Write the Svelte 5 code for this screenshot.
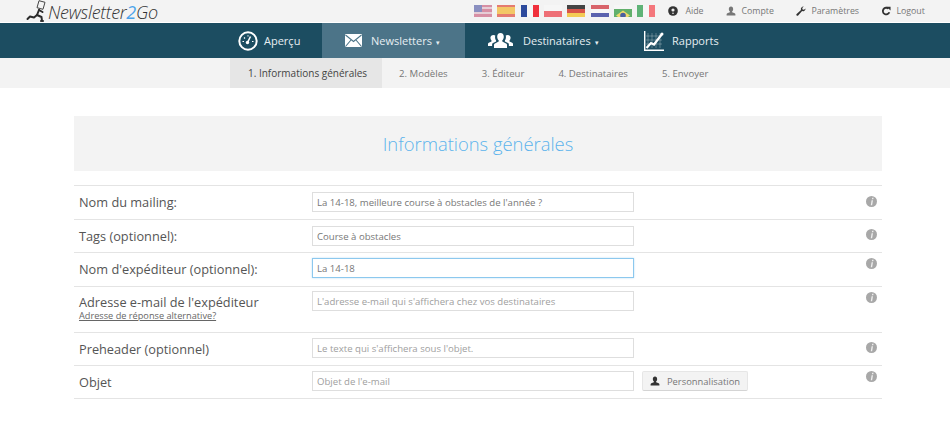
<script>
  const flags = [
    { name: 'us', stripes: ['#d78fa4', '#e6cdd6', '#d78fa4', '#e6cdd6', '#d78fa4'], canton: '#8a8fc0' },
    { name: 'es', stripes: ['#e57b70', '#f3c766', '#f3c766', '#f3c766', '#e57b70'], canton: null },
    { name: 'fr', cols: ['#2d4a9c', '#f6f6f6', '#f0303c'] },
    { name: 'pl', stripes: ['#f6f6f6', '#f6f6f6', '#ee6f76', '#ee6f76'], canton: null },
    { name: 'de', stripes: ['#444', '#d9554a', '#f3cb55'], canton: null },
    { name: 'nl', stripes: ['#d8636a', '#f6f6f6', '#5a62ae'], canton: null },
    { name: 'br', brazil: true },
    { name: 'it', cols: ['#5fb377', '#f6f6f6', '#f4777c'] }
  ];

  const steps = ['1. Informations générales', '2. Modèles', '3. Éditeur', '4. Destinataires', '5. Envoyer'];

  const rows = [
    { label: 'Nom du mailing:', value: 'La 14-18, meilleure course à obstacles de l\'année ?' },
    { label: 'Tags (optionnel):', value: 'Course à obstacles' },
    { label: 'Nom d\'expéditeur (optionnel):', value: 'La 14-18', focus: true },
    { label: 'Adresse e-mail de l\'expéditeur', placeholder: 'L\'adresse e-mail qui s\'affichera chez vos destinataires', link: 'Adresse de réponse alternative?' },
    { label: 'Preheader (optionnel)', placeholder: 'Le texte qui s\'affichera sous l\'objet.' },
    { label: 'Objet', placeholder: 'Objet de l\'e-mail', button: true }
  ];
</script>

{#snippet person(size)}
  <svg class="ico" width={size} height={size} viewBox="0 0 12 12">
    <path fill="currentColor" d="M6 .5c1.700 0 2.600 1.300 2.600 3 0 1.200-.5 2.300-1.200 2.900v1.100l3 1.300c.6.300.9.700.9 1.300v1.400H.7v-1.400c0-.6.300-1 .9-1.300l3-1.300V6.400C3.900 5.800 3.400 4.700 3.400 3.500c0-1.700.9-3 2.600-3z" />
  </svg>
{/snippet}

<header class="top">
  <div class="logo">
    <svg width="22" height="22" viewBox="0 0 22 22">
      <path fill="#f3f3f3" stroke="#444" stroke-width="1" d="M13 .7l6 1.600-2 7-6-1.600z" />
      <g fill="none" stroke="#2b2b2b" stroke-width="2" stroke-linecap="round" stroke-linejoin="round">
        <path d="M13 10l-2 5 4.500 2 .5 4" />
        <path d="M11 15l-3 2.500-4-1-2.500 2.500" />
        <path d="M13 10l3.500 2" />
      </g>
      <path d="M14 21h4" stroke="#2b2b2b" stroke-width="1.500" />
    </svg>
    <span class="logo-text">Newsletter<b>2</b>Go</span>
  </div>
  <div class="flags">
    {#each flags as f}
      <span class="flag">
        {#if f.cols}
          <span class="cols">
            {#each f.cols as c}<i style="background:{c}"></i>{/each}
          </span>
        {:else if f.brazil}
          <svg width="18" height="13" viewBox="0 0 18 13">
            <rect width="18" height="13" fill="#62b06c" />
            <path d="M9 1.500l7 5-7 5-7-5z" fill="#efd96a" />
            <circle cx="9" cy="6.500" r="2.800" fill="#4a5fa0" />
          </svg>
        {:else}
          <span class="stripes">
            {#each f.stripes as c}<i style="background:{c}"></i>{/each}
          </span>
          {#if f.canton}<span class="canton" style="background:{f.canton}"></span>{/if}
        {/if}
      </span>
    {/each}
  </div>
  <nav class="tools">
    <span class="tool aide">
      <svg class="ico" width="10" height="10" viewBox="0 0 12 12">
        <circle cx="6" cy="6" r="5.800" fill="#333" />
        <circle cx="6" cy="4.800" r="1.900" fill="#eee" />
        <rect x="5.200" y="8" width="1.600" height="1.600" fill="#eee" />
      </svg>
      Aide
    </span>
    <span class="tool compte">{@render person(10)} Compte</span>
    <span class="tool params">
      <svg class="ico" width="10" height="10" viewBox="0 0 12 12">
        <path fill="#333" d="M11.500 3a3.200 3.200 0 0 1-4.200 3L2.600 11.300a1.200 1.200 0 0 1-1.800-1.700L6 4.700A3.200 3.200 0 0 1 9.300.5L7.500 2.400l.4 1.700 1.700.4z" />
      </svg>
      Paramètres
    </span>
    <span class="tool logout">
      <svg class="ico" width="10" height="10" viewBox="0 0 12 12">
        <path fill="none" stroke="#333" stroke-width="2.200" d="M9 3.200A4 4 0 1 0 10 7.500" />
        <path fill="#333" d="M6.500 1h5v4.500z" />
      </svg>
      Logout
    </span>
  </nav>
</header>

<nav class="main">
  <a class="item apercu">
    <svg width="20" height="20" viewBox="0 0 20 20">
      <circle cx="10" cy="10" r="8.700" fill="none" stroke="#fff" stroke-width="2" />
      <path d="M9.500 11.500L12.500 5.500" stroke="#fff" stroke-width="1.500" />
      <circle cx="9.500" cy="11.500" r="1.700" fill="#fff" />
      <path d="M4.500 10.500h1.500M14 10.500h1.500M6 6.500l1 1M10 4.200v1.300" stroke="#fff" stroke-width="1.100" />
    </svg>
    <span>Aperçu</span>
  </a>
  <a class="item active">
    <svg width="17" height="13" viewBox="0 0 17 13">
      <rect width="17" height="13" rx="1" fill="#fff" />
      <path d="M.5 1l8 6.500 8-6.500M.5 12.500l5.500-6.500M16.500 12.500L11 6" fill="none" stroke="#4c7488" stroke-width="1.100" />
    </svg>
    <span>Newsletters<small>▾</small></span>
  </a>
  <a class="item dest">
    <svg width="25" height="17" viewBox="0 0 25 17">
      <g fill="#fff">
        <path d="M12.500 1c2.200 0 3.300 1.600 3.300 3.700 0 1.500-.6 2.800-1.500 3.600v1.300l3.700 1.800c.7.300 1 .8 1 1.500V16H6v-3.100c0-.7.300-1.200 1-1.500l3.700-1.800V8.300c-.9-.8-1.500-2.100-1.500-3.600C9.200 2.600 10.300 1 12.500 1z" />
        <path d="M5.500 3c.7 0 1.300.2 1.800.6-.5 1.800-.2 3.600.8 5v.9L5 11c-.6.300-.9.800-.9 1.500V14H0v-2c0-.6.200-.9.800-1.200L3.500 9.500v-1C2.800 7.800 2.400 6.800 2.400 5.800 2.400 4.200 3.700 3 5.500 3z" />
        <path d="M19.500 3c-.7 0-1.300.2-1.800.6.500 1.800.2 3.600-.8 5v.9l3.100 1.500c.6.300.9.800.9 1.500V14H25v-2c0-.6-.2-.9-.8-1.200l-2.700-1.300v-1c.7-.7 1.100-1.700 1.100-2.700C22.600 4.200 21.300 3 19.500 3z" />
      </g>
    </svg>
    <span>Destinataires<small>▾</small></span>
  </a>
  <a class="item rapports">
    <svg width="20" height="20" viewBox="0 0 20 20">
      <path d="M.7 0v19.300H20" fill="none" stroke="#fff" stroke-width="1.400" />
      <path d="M4 2v15M8 2v15M12 2v15M16 2v15M2 5h16M2 9h16M2 13h16" stroke="#fff" stroke-opacity=".4" stroke-width=".7" />
      <path d="M2.500 17l4.500-5 3 1.500L18 3" fill="none" stroke="#fff" stroke-width="2.200" />
      <circle cx="18" cy="3" r="1.500" fill="#fff" />
    </svg>
    <span>Rapports</span>
  </a>
</nav>

<nav class="steps">
  {#each steps as s, i}
    <a class="step" class:on={i === 0}>{s}</a>
  {/each}
</nav>

<main class="content">
  <h1>Informations générales</h1>
  <div class="form">
    {#each rows as r}
      <div class="row" class:tall={r.link}>
        <div class="label">
          {r.label}
          {#if r.link}<a class="alt">{r.link}</a>{/if}
        </div>
        <div class="field">
          <input
            type="text"
            class:focus={r.focus}
            value={r.value ?? ''}
            placeholder={r.placeholder ?? ''}
          />
          {#if r.button}
            <button type="button">{@render person(10)} Personnalisation</button>
          {/if}
        </div>
        <svg class="info" width="11" height="11" viewBox="0 0 12 12">
          <circle cx="6" cy="6" r="6" fill="#a8a8a8" />
          <path d="M6.800 2h1.500l-.4 1.500H6.400zM6.100 4.600h1.500L6.700 10H5.200z" fill="#f0f0f0" />
        </svg>
      </div>
    {/each}
  </div>
</main>

<style>
  :global(body) {
    margin: 0;
    background: #fff;
    font-family: "Open Sans", sans-serif;
    color: #444;
    overflow: hidden;
  }
  a { text-decoration: none; }
  .ico { flex: none; }

  .top {
    height: 22px;
    background: #f3f3f3;
    border-bottom: 1px solid #fff;
    display: flex;
    align-items: center;
    padding-left: 26px;
  }
  .logo {
    display: flex;
    align-items: center;
    width: 448px;
    height: 22px;
  }
  .logo svg { flex: none; }
  .logo-text {
    font-style: italic;
    font-weight: 300;
    font-size: 18px;
    letter-spacing: -.3px;
    color: #333;
    margin-top: 1px;
  }
  .logo-text b { color: #4aa3ea; font-weight: 400; }
  .flags { display: flex; gap: 5.350px; }
  .flag {
    display: block;
    width: 18px;
    height: 12px;
    position: relative;
    overflow: hidden;
    background: #f6f6f6;
    margin-top: -1px;
  }
  .stripes, .cols { display: flex; width: 100%; height: 100%; }
  .stripes { flex-direction: column; }
  .stripes i, .cols i { flex: 1; display: block; }
  .canton { position: absolute; left: 0; top: 0; width: 8px; height: 7px; }
  .tools { display: flex; align-items: center; font-size: 8.800px; color: #777; margin-left: 13px; }
  .tool { display: flex; align-items: center; gap: 6px; }
  .aide { width: 58px; gap: 7px; }
  .compte { width: 70px; gap: 5px; }
  .params { width: 85px; gap: 5px; }
  .logout { gap: 5px; }

  .main {
    height: 35px;
    background: #1c4d61;
    display: flex;
    padding-left: 222px;
    color: #fff;
  }
  .item {
    display: flex;
    align-items: center;
    font-size: 11px;
    color: #e6eef2;
    box-sizing: border-box;
  }
  .apercu { width: 100px; padding-left: 16px; gap: 6px; }
  .active { width: 143px; padding-left: 23px; background: #4c7488; gap: 9px; }
  .dest { width: 179px; padding-left: 23px; gap: 10px; }
  .rapports { gap: 8px; }
  .item small { font-size: 7px; margin-left: 4px; }

  .steps {
    height: 30px;
    background: #f3f3f3;
    display: flex;
    padding-left: 230px;
    font-size: 9.600px;
    color: #777;
  }
  .step { display: flex; align-items: center; padding: 0 17px; color: #777; }
  .step.on { background: #e6e6e6; color: #444; font-size: 10px; padding: 0 15px 0 18px; }

  .content { padding: 28px 68px 0 74px; }
  h1 {
    margin: 0 0 14px;
    height: 55px;
    background: #f3f3f3;
    font-size: 18.400px;
    font-weight: 300;
    line-height: 55px;
    text-align: center;
    color: #5cb3ec;
  }
  .form { border-bottom: 1px solid #e4e4e4; }
  .row {
    display: flex;
    height: 32px;
    border-top: 1px solid #e4e4e4;
    position: relative;
  }
  .row:nth-child(1), .row:nth-child(3) { height: 33px; }
  .row.tall { height: 45px; }
  .label {
    width: 233px;
    padding: 7px 0 0 5px;
    font-size: 12.750px;
    line-height: 18px;
    color: #555;
  }
  .tall .label { padding-top: 6px; }
  .alt {
    display: block;
    font-size: 9.200px;
    line-height: 9px;
    color: #666;
    text-decoration: underline;
  }
  .field { display: flex; align-items: flex-start; gap: 8px; padding-top: 5px; }
  .row:nth-child(1) .field, .row:nth-child(2) .field { padding-top: 6px; }
  .tall .field { padding-top: 4px; }
  input {
    width: 322px;
    height: 20px;
    box-sizing: border-box;
    border: 1px solid #dedede;
    background: #fff;
    padding: 0 4px;
    font-family: inherit;
    font-size: 9.600px;
    color: #777;
    outline: none;
  }
  input::placeholder { color: #a0a0a0; opacity: 1; }
  input.focus { border-color: #8cc8ee; box-shadow: 0 0 2px #bfe0f5; }
  button {
    height: 20px;
    width: 106px;
    display: flex;
    align-items: center;
    justify-content: center;
    gap: 7px;
    border: 1px solid #e6e6e6;
    border-bottom-color: #d4d4d4;
    border-radius: 2px;
    background: #f3f3f3;
    font-family: inherit;
    font-size: 9.400px;
    color: #777;
    padding: 0;
  }
  button :global(.ico) { color: #333; }
  .info { position: absolute; right: 5px; top: 4.500px; }
  .row:nth-child(1) .info { top: 9.500px; }
  .row:nth-child(2) .info, .row:nth-child(5) .info { top: 8.500px; }
</style>
